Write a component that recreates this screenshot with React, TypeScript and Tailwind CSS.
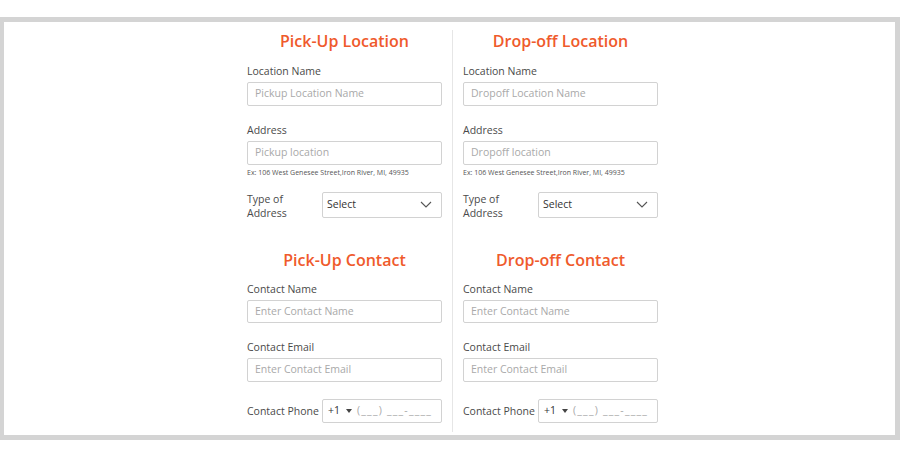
import React from "react";

const font = { fontFamily: "'Open Sans', 'Liberation Sans', sans-serif" };

const Heading: React.FC<{ children: React.ReactNode; className?: string }> = ({ children, className }) => (
    <h2 className={`text-center text-[16px] font-semibold leading-[22px] text-[#ef5a2c] ${className ?? ""}`}>{children}</h2>
);

const Label: React.FC<{ children: React.ReactNode; className?: string }> = ({ children, className }) => (
    <div className={`text-[10.5px] leading-[14px] text-[#4a4a4a] ${className ?? ""}`}>{children}</div>
);

const TextField: React.FC<{ placeholder: string }> = ({ placeholder }) => (
    <div className="mt-[4px] flex h-[24px] items-center rounded-[2px] border border-[#d2d2d2] px-[7px] text-[10.5px] text-[#a9a9a9]">
        {placeholder}
    </div>
);

const Chevron = () => (
    <svg width="12" height="7" viewBox="0 0 12 7" fill="none" className="text-[#555]">
        <path d="M1 1l5 5 5-5" stroke="currentColor" strokeWidth="1.1" />
    </svg>
);

const Caret = () => (
    <svg width="6" height="4" viewBox="0 0 6 4" className="ml-[6px] text-[#444]">
        <path d="M0 0h6L3 4z" fill="currentColor" />
    </svg>
);

const Column: React.FC<{ side: "pickup" | "dropoff" }> = ({ side }) => {
    const pickup = side === "pickup";
    return (
        <div className="flex w-[195px] flex-col pb-[9px]">
            <Heading>{pickup ? "Pick-Up Location" : "Drop-off Location"}</Heading>

            <Label className="mt-[12px]">Location Name</Label>
            <TextField placeholder={pickup ? "Pickup Location Name" : "Dropoff Location Name"} />

            <Label className="mt-[17px]">Address</Label>
            <TextField placeholder={pickup ? "Pickup location" : "Dropoff location"} />
            <div className="mt-[3px] text-[7px] leading-[10px] text-[#555]">
                Ex: 106 West Genesee Street,Iron River, MI, 49935
            </div>

            <div className="mt-[14px] flex items-start">
                <Label className="w-[75px]">
                    Type of
                    <br />
                    Address
                </Label>
                <div className="flex h-[26px] flex-1 items-center justify-between rounded-[2px] border border-[#d2d2d2] pl-[4px] pr-[9px] text-[10.5px] text-[#333]">
                    <span>Select</span>
                    <Chevron />
                </div>
            </div>

            <Heading className="mt-[29px]">{pickup ? "Pick-Up Contact" : "Drop-off Contact"}</Heading>

            <Label className="mt-[11px]">Contact Name</Label>
            <TextField placeholder="Enter Contact Name" />

            <Label className="mt-[17px]">Contact Email</Label>
            <TextField placeholder="Enter Contact Email" />

            <div className="mt-[17px] flex items-center">
                <Label className="w-[75px]">Contact Phone</Label>
                <div className="flex h-[24px] flex-1 items-center rounded-[2px] border border-[#d2d2d2] pl-[5px] text-[10.5px]">
                    <span className="text-[#333]">+1</span>
                    <Caret />
                    <span className="ml-[5px] tracking-[1.2px] text-[#a9a9a9]">(___) ___-____</span>
                </div>
            </div>
        </div>
    );
};

const App = () => {
    return (
        <div className="h-[470px] w-[900px] overflow-hidden bg-white pt-[17px]" style={font}>
            <div className="h-[423px] border-[5px] border-l-[4px] border-[#d4d4d4] bg-white">
                <div className="flex h-full pl-[243px] pt-[8px] pb-[3px]">
                    <Column side="pickup" />
                    <div className="flex w-[21px] justify-center">
                        <div className="w-[1.5px] bg-[#e6e6e6]" />
                    </div>
                    <Column side="dropoff" />
                </div>
            </div>
        </div>
    );
};

export default App;
